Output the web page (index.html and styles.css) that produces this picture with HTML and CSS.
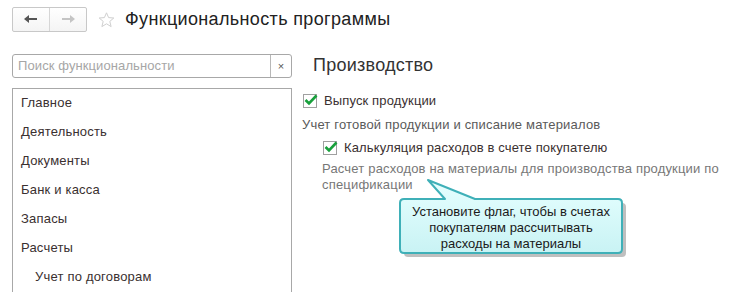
FILE: index.html
```
<!DOCTYPE HTML>
<html>

	<head>
		<meta http-equiv="Content-Type" content="text/html; charset=utf-8">
		<link rel="stylesheet" href="styles.css">
	</head>

	<body>
		<div class="header">
			<div class="nav">
				<span class="nav-btn back">
					<svg width="14" height="10" viewBox="0 0 14 10"><path d="M0 5 L5 1 L5 4 L13 4 L13 6 L5 6 L5 9 Z" fill="#555"/></svg>
				</span>
				<span class="nav-btn fwd">
					<svg width="14" height="10" viewBox="0 0 14 10"><path d="M14 5 L9 1 L9 4 L1 4 L1 6 L9 6 L9 9 Z" fill="#c4c4c4"/></svg>
				</span>
			</div>
			<svg class="star" width="17" height="16" viewBox="0 0 17 16"><path d="M8.5 0.8 L10.6 5.6 L15.8 6 L11.8 9.4 L13.1 14.6 L8.5 11.8 L3.9 14.6 L5.2 9.4 L1.2 6 L6.4 5.6 Z" fill="none" stroke="#cfcfcf" stroke-width="1"/></svg>
			<h1 class="title">Функциональность программы</h1>
		</div>

		<div class="main">
			<div class="side">
				<div class="search">
					<span class="search-text">Поиск функциональности</span>
					<span class="search-clear">×</span>
				</div>
				<ul class="sections">
					<li>Главное</li>
					<li>Деятельность</li>
					<li>Документы</li>
					<li>Банк и касса</li>
					<li>Запасы</li>
					<li>Расчеты</li>
					<li class="sub">Учет по договорам</li>
				</ul>
			</div>

			<div class="content">
				<h2 class="section-title">Производство</h2>
				<div class="option">
					<span class="check"><svg width="14" height="12" viewBox="0 0 14 12"><path d="M1.5 6 L5 9.5 L12.5 1.5" fill="none" stroke="#18a03c" stroke-width="2.6"/></svg></span>
					<span class="label">Выпуск продукции</span>
				</div>
				<div class="desc">Учет готовой продукции и списание материалов</div>
				<div class="nested">
					<div class="option">
						<span class="check"><svg width="14" height="12" viewBox="0 0 14 12"><path d="M1.5 6 L5 9.5 L12.5 1.5" fill="none" stroke="#18a03c" stroke-width="2.6"/></svg></span>
						<span class="label">Калькуляция расходов в счете покупателю</span>
					</div>
					<div class="desc light">Расчет расходов на материалы для производства продукции по<br>спецификации</div>
				</div>
			</div>
		</div>

		<div class="callout">
			<svg class="callout-bg" width="236" height="86" viewBox="0 0 236 86">
				<defs>
					<linearGradient id="cg" x1="0" y1="0" x2="0" y2="1">
						<stop offset="0" stop-color="#e6ffff"/>
						<stop offset="1" stop-color="#c9f3f4"/>
					</linearGradient>
				</defs>
				<path d="M47 26 L30 7 L77 26 L220 26 Q224 26 224 30 L224 76 Q224 80 220 80 L6 80 Q2 80 2 76 L2 30 Q2 26 6 26 Z" fill="#8a8a8a" opacity="0.55" transform="translate(4 4)"/>
				<path d="M47 26 L30 7 L77 26 L220 26 Q224 26 224 30 L224 76 Q224 80 220 80 L6 80 Q2 80 2 76 L2 30 Q2 26 6 26 Z" fill="url(#cg)" stroke="#3fb0b8" stroke-width="2" stroke-linejoin="round"/>
			</svg>
			<div class="callout-text">Установите флаг, чтобы в счетах<br>покупателям рассчитывать<br>расходы на материалы</div>
		</div>
	</body>

</html>
```

FILE: styles.css
```
* {
	margin: 0;
	padding: 0;
}

body {
	font-family: "Liberation Sans", Arial, sans-serif;
	color: #333;
	background: #fff;
	width: 734px;
	height: 292px;
	overflow: hidden;
	position: relative;
}

.header {
	display: flex;
	align-items: center;
	height: 38px;
	padding-left: 12px;
}

.nav {
	display: flex;
	height: 23px;
	border: 1px solid #c8c8c8;
	border-radius: 2px;
	background: linear-gradient(#fff, #f4f4f4);
}

.nav-btn {
	width: 36px;
	display: flex;
	align-items: center;
	justify-content: center;
}

.nav-btn.back {
	border-right: 1px solid #d6d6d6;
}

.star {
	margin-left: 11px;
	margin-top: 1px;
}

.title {
	font-weight: normal;
	font-size: 18px;
	letter-spacing: 0.35px;
	color: #222;
	margin-left: 10px;
}

.main {
	display: flex;
	padding-left: 12px;
	padding-top: 16px;
}

.side {
	width: 280px;
}

.search {
	display: flex;
	height: 22px;
	border: 1px solid #a8a8a8;
	border-radius: 3px;
}

.search-text {
	flex: 1;
	font-size: 13px;
	letter-spacing: 0.1px;
	line-height: 22px;
	color: #a6a6a6;
	padding-left: 5px;
}

.search-clear {
	width: 20px;
	border-left: 1px solid #b8b8b8;
	font-size: 11px;
	line-height: 22px;
	text-align: center;
	color: #555;
}

.sections {
	list-style: none;
	margin-top: 10px;
	border: 1px solid #a8a8a8;
	border-bottom: none;
	height: 204px;
	overflow: hidden;
}

.sections li {
	height: 29px;
	line-height: 28px;
	font-size: 13px;
	letter-spacing: 0.2px;
	padding-left: 8px;
	color: #3a3030;
}

.sections li.sub {
	padding-left: 22px;
}

.content {
	margin-left: 10px;
}

.section-title {
	font-weight: normal;
	font-size: 18px;
	letter-spacing: 0.25px;
	color: #333;
	line-height: 22px;
	padding-left: 11px;
}

.option {
	display: flex;
	align-items: center;
	margin-top: 17px;
	padding-left: 1px;
}

.check {
	width: 12px;
	height: 12px;
	border: 1px solid #a0a0a0;
	background: #fff;
	position: relative;
}

.check svg {
	position: absolute;
	left: 0;
	top: -1px;
}

.label {
	font-size: 13px;
	letter-spacing: 0.13px;
	margin-left: 7px;
	color: #3a3030;
}

.desc {
	font-size: 13px;
	letter-spacing: 0.18px;
	color: #5a5a5a;
	margin-top: 9px;
	line-height: 16px;
}

.nested {
	padding-left: 20px;
}

.nested .option {
	margin-top: 7px;
}

.desc.light {
	color: #777;
	margin-top: 6px;
}

.callout {
	position: absolute;
	left: 398px;
	top: 173px;
	width: 236px;
	height: 86px;
}

.callout-bg {
	position: absolute;
	left: 0;
	top: 0;
}

.callout-text {
	position: absolute;
	left: 2px;
	top: 31px;
	width: 222px;
	text-align: center;
	font-size: 13px;
	line-height: 16px;
	color: #1a1a1a;
}
```
